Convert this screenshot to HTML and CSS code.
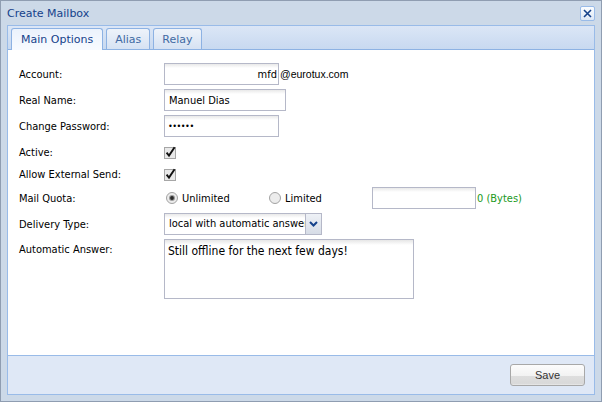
FILE: index.html
```html
<!DOCTYPE html>
<html>
<head>
<meta charset="utf-8">
<title>Create Mailbox</title>
<link rel="stylesheet" href="styles.css">
</head>
<body>
<div class="win">
  <div class="hdr">
    <span class="title">Create Mailbox</span>
    <span class="close"><svg width="13" height="13" viewBox="0 0 13 13"><path d="M3 3 L10 10 M10 3 L3 10" stroke="#15428b" stroke-width="1.6" fill="none"/></svg></span>
  </div>
  <div class="panel">
    <div class="strip">
      <div class="tab active">Main Options</div>
      <div class="tab">Alias</div>
      <div class="tab">Relay</div>
    </div>
    <div class="body">
      <div class="row">
        <div class="label">Account:</div>
        <input class="field w115 right" type="text" value="mfd">
        <span class="domain">@eurotux.com</span>
      </div>
      <div class="row">
        <div class="label">Real Name:</div>
        <input class="field w122" type="text" value="Manuel Dias">
      </div>
      <div class="row">
        <div class="label">Change Password:</div>
        <div class="field w115 pass">••••••</div>
      </div>
      <div class="row chk">
        <div class="label">Active:</div>
        <svg class="cb" width="13" height="13" viewBox="0 0 13 13"><rect x="0.5" y="1.5" width="11" height="11" fill="#e9e9e9" stroke="#a6a6a6"/><path d="M2.6 6.6 L5 9.6 L10.6 1.2" stroke="#111" stroke-width="1.9" fill="none"/></svg>
      </div>
      <div class="row chk last">
        <div class="label">Allow External Send:</div>
        <svg class="cb" width="13" height="13" viewBox="0 0 13 13"><rect x="0.5" y="1.5" width="11" height="11" fill="#e9e9e9" stroke="#a6a6a6"/><path d="M2.6 6.6 L5 9.6 L10.6 1.2" stroke="#111" stroke-width="1.9" fill="none"/></svg>
      </div>
      <div class="row">
        <div class="label">Mail Quota:</div>
        <div class="radio first">
          <svg width="12" height="12" viewBox="0 0 12 12"><circle cx="6" cy="6" r="5.5" fill="#ececec" stroke="#a2a2a2"/><circle cx="6" cy="6" r="3" fill="#9a9a9a"/><circle cx="6" cy="6" r="1.9" fill="#2a2a2a"/></svg>
          <span>Unlimited</span>
        </div>
        <div class="radio">
          <svg width="12" height="12" viewBox="0 0 12 12"><circle cx="6" cy="6" r="5.5" fill="#ececec" stroke="#a2a2a2"/></svg>
          <span>Limited</span>
        </div>
        <input class="field w104" type="text" value="">
        <span class="bytes">0 (Bytes)</span>
      </div>
      <div class="row">
        <div class="label">Delivery Type:</div>
        <div class="combo">
          <div class="field combo-text">local with automatic answer</div>
          <div class="trigger"><svg width="9" height="6" viewBox="0 0 9 6"><path d="M1 1 L4.5 4.5 L8 1" stroke="#15428b" stroke-width="2" fill="none"/></svg></div>
        </div>
      </div>
      <div class="row area-row">
        <div class="label top">Automatic Answer:</div>
        <textarea class="field area">Still offline for the next few days!</textarea>
      </div>
    </div>
    <div class="foot">
      <button class="btn">Save</button>
    </div>
  </div>
</div>
</body>
</html>
```

FILE: styles.css
```css
html, body {
  margin: 0;
  padding: 0;
}
body {
  width: 602px;
  height: 402px;
  overflow: hidden;
  background: #ffffff;
}
.win {
  box-sizing: border-box;
  width: 602px;
  height: 402px;
  border: 1px solid #8f9db1;
  background: #ccd9e8;
  padding: 0 6px 6px 6px;
  display: flex;
  flex-direction: column;
}
.hdr {
  height: 24px;
  flex: none;
  display: flex;
  align-items: center;
  justify-content: space-between;
}
.title {
  font-family: "DejaVu Sans", sans-serif;
  font-size: 11px;
  color: #15428b;
}
.close {
  box-sizing: border-box;
  width: 15px;
  height: 15px;
  margin-top: 1px;
  border: 1px solid #99bbe8;
  border-radius: 2px;
  background: linear-gradient(#fbfdff, #dce7f6);
  display: flex;
  align-items: center;
  justify-content: center;
}
.close svg { display: block; }
.panel {
  flex: 1;
  border: 1px solid #99bbe8;
  background: #dfe8f6;
  display: flex;
  flex-direction: column;
}
.strip {
  box-sizing: border-box;
  height: 24px;
  flex: none;
  padding: 2px 0 0 3px;
  display: flex;
  align-items: flex-end;
  gap: 3px;
  border-bottom: 1px solid #8db2e3;
  background: linear-gradient(#dbe6f6, #c8d9f0);
}
.tab {
  box-sizing: border-box;
  height: 21px;
  padding: 0 8px;
  border: 1px solid #8db2e3;
  border-bottom: none;
  border-radius: 3px 3px 0 0;
  background: linear-gradient(#eef3fa, #d6e2f3);
  font-family: "DejaVu Sans", sans-serif;
  font-size: 11px;
  color: #416aa3;
  display: flex;
  align-items: center;
}
.tab.active {
  height: 22px;
  margin-bottom: -1px;
  padding: 0 9px 1px 9px;
  background: linear-gradient(#ebf2fc, #f8fbff);
  color: #15428b;
}
.body {
  box-sizing: border-box;
  height: 306px;
  flex: none;
  background: #ffffff;
  border-bottom: 1px solid #99bbe8;
  padding: 13px 0 0 11px;
  font-family: "DejaVu Sans Condensed", "DejaVu Sans", sans-serif;
  font-stretch: semi-condensed;
  font-size: 11px;
  color: #000;
}
.row {
  display: flex;
  align-items: center;
  height: 22px;
  margin-bottom: 4px;
}
.row.chk { margin-bottom: 0; }
.row.chk.last { margin-bottom: 2px; }
.row.area-row {
  align-items: flex-start;
  height: 60px;
}
.label {
  width: 145px;
  flex: none;
  line-height: 13px;
}
.label.top { padding-top: 4px; }
.field {
  box-sizing: border-box;
  height: 22px;
  margin: 0;
  border: 1px solid #b5b8c8;
  background: linear-gradient(#e9e9e9, #ffffff 4px);
  padding: 1px 3px 1px 4px;
  font-family: "DejaVu Sans Condensed", "DejaVu Sans", sans-serif;
  font-stretch: semi-condensed;
  font-size: 11px;
  color: #000;
  outline: none;
  line-height: 18px;
}
.w115 { width: 115px; }
.w122 { width: 122px; }
.w104 { width: 104px; }
.right { text-align: right; padding-right: 1px; }
.pass {
  font-size: 9px;
  letter-spacing: -0.5px;
  padding-left: 3px;
}
.domain {
  font-family: "Liberation Sans", Arial, sans-serif;
  font-size: 10.5px;
  margin-left: 1px;
}
.cb { display: block; flex: none; }
.radio {
  width: 104px;
  flex: none;
  display: flex;
  align-items: center;
  gap: 4px;
}
.radio.first { padding-left: 2px; box-sizing: border-box; }
.radio.first { width: 104px; }
.radio svg { display: block; flex: none; }
.radio + .radio { padding-left: 1px; box-sizing: border-box; }
.radio + .radio svg { margin-left: 0; }
.bytes {
  margin-left: 1px;
  color: #229922;
}
.combo {
  display: flex;
  width: 158px;
}
.combo-text {
  width: 141px;
  border-right: none;
  padding-left: 4px;
  white-space: nowrap;
  overflow: hidden;
}
.trigger {
  box-sizing: border-box;
  width: 17px;
  height: 22px;
  border: 1px solid #b5b8c8;
  background: linear-gradient(#eef1f6, #d6dce6);
  display: flex;
  align-items: center;
  justify-content: center;
}
.trigger svg { display: block; }
.area {
  width: 250px;
  height: 60px;
  resize: none;
  font-size: 12px;
  line-height: 16px;
  padding: 3px 3px;
  background: linear-gradient(#e6e6e6, #ffffff 5px);
}
.foot {
  flex: 1;
  box-sizing: border-box;
  padding: 8px 9px 8px 0;
  display: flex;
  justify-content: flex-end;
  align-items: flex-start;
}
.btn {
  box-sizing: border-box;
  width: 75px;
  height: 22px;
  margin: 0;
  padding: 0;
  border: 1px solid #a8a8a8;
  border-radius: 3px;
  background: linear-gradient(#fcfcfc 0, #f2f2f2 55%, #dedede 56%, #d9d9d9 92%, #eaeaea 100%);
  font-family: "Liberation Sans", Arial, sans-serif;
  font-size: 11px;
  color: #333;
}
```
